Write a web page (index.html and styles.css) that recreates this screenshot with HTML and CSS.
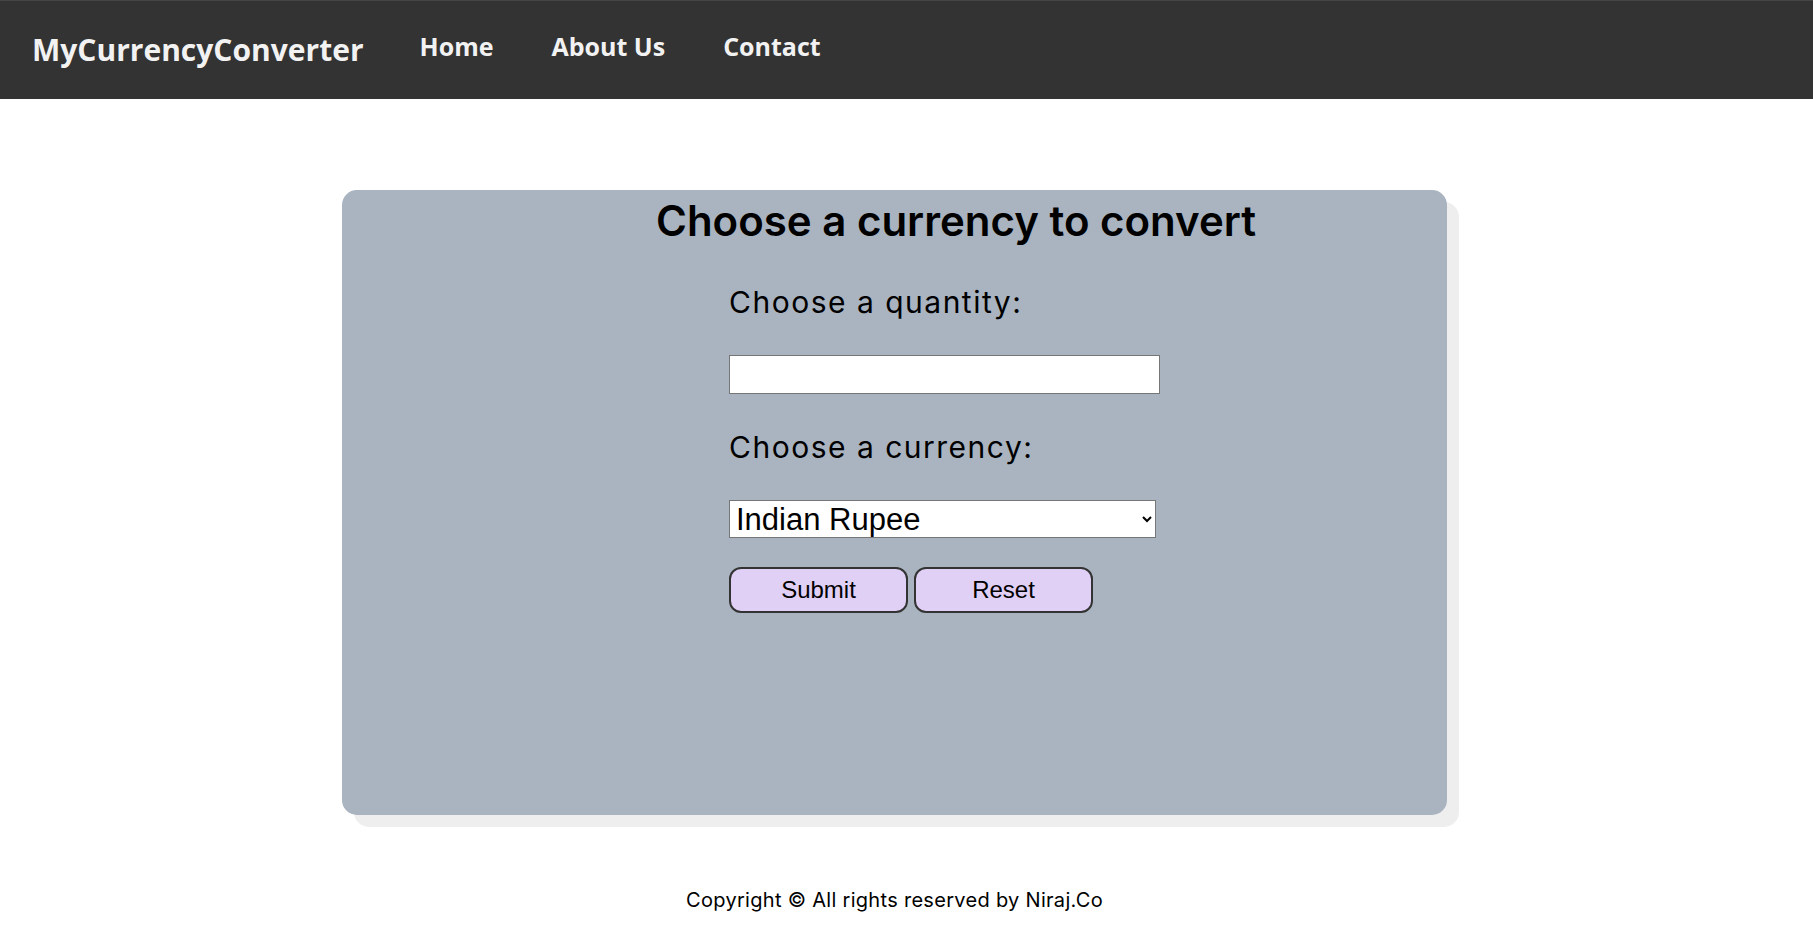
FILE: index.html
```html
<!DOCTYPE html>
<html lang="en">
<head>
<meta charset="utf-8">
<title>MyCurrencyConverter</title>
<link rel="stylesheet" href="styles.css">
</head>
<body>
<nav class="navbar">
  <a class="brand" href="#">MyCurrencyConverter</a>
  <ul class="nav-links">
    <li><a href="#">Home</a></li>
    <li><a href="#">About Us</a></li>
    <li><a href="#">Contact</a></li>
  </ul>
</nav>
<main class="page">
  <section class="card">
    <h1 class="card-title">Choose a currency to convert</h1>
    <form class="converter">
      <label class="field-label" for="qty">Choose a quantity:</label>
      <input class="field-input" id="qty" type="text">
      <label class="field-label" for="cur">Choose a currency:</label>
      <select class="field-select" id="cur">
        <option>Indian Rupee</option>
        <option>US Dollar</option>
        <option>Euro</option>
      </select>
      <div class="actions">
        <button class="btn" type="submit">Submit</button>
        <button class="btn" type="reset">Reset</button>
      </div>
    </form>
  </section>
  <footer class="footer">Copyright © All rights reserved by Niraj.Co</footer>
</main>
</body>
</html>
```
FILE: styles.css
```css
* { box-sizing: border-box; }
html, body { margin: 0; padding: 0; background: #ffffff; }
body { font-family: Inter, "Liberation Sans", sans-serif; color: #000; }

.navbar {
  display: flex;
  align-items: center;
  height: 99px;
  background: #333333;
  border-top: 1px solid #454545;
  padding-left: 32px;
}
.brand {
  font-family: "Open Sans", sans-serif;
  font-weight: 700;
  font-size: 30px;
  color: #f2f2f2;
  text-decoration: none;
  margin-bottom: 1px;
}
.nav-links {
  display: flex;
  list-style: none;
  margin: 0 0 8px 27px;
  padding: 0;
}
.nav-links a {
  display: block;
  padding: 0 29px;
  font-family: "Open Sans", sans-serif;
  font-weight: 700;
  font-size: 25px;
  color: #f2f2f2;
  text-decoration: none;
}

.page {
  width: 1105px;
  margin-left: 342px;
  padding-top: 91px;
}
.card {
  height: 625px;
  background: #a9b4c0;
  border-radius: 15px;
  box-shadow: 12px 12px 0 #eeeeee;
  padding-top: 6px;
}
.card-title {
  margin: 0;
  padding-left: 123px;
  text-align: center;
  font-size: 42px;
  line-height: 50px;
  font-weight: 600;
}
.converter {
  padding-left: 387px;
  padding-top: 38px;
}
.field-label {
  display: block;
  font-size: 30px;
  line-height: 36px;
  letter-spacing: 1.5px;
  margin-bottom: 35px;
}
.field-input {
  display: block;
  width: 431px;
  height: 39px;
  border: 1px solid #767676;
  background: #fff;
  margin: 0 0 35px 0;
  padding: 0 6px;
  font-size: 20px;
}
.field-select {
  display: block;
  width: 427px;
  height: 38px;
  border: 1px solid #767676;
  border-radius: 0;
  background: #fff;
  margin: 0 0 29px 0;
  padding: 0 2px;
  font-family: Arial, "Liberation Sans", sans-serif;
  font-size: 31px;
  color: #000;
}
.actions { display: flex; gap: 6px; }
.btn {
  width: 179px;
  height: 46px;
  background: #e0d0f5;
  border: 2px solid #333;
  border-radius: 12px;
  font-family: Arial, "Liberation Sans", sans-serif;
  font-size: 24px;
  color: #000;
  padding: 0;
}

.footer {
  margin-top: 73px;
  text-align: center;
  font-size: 20px;
  line-height: 24px;
  letter-spacing: 0.3px;
}
```
